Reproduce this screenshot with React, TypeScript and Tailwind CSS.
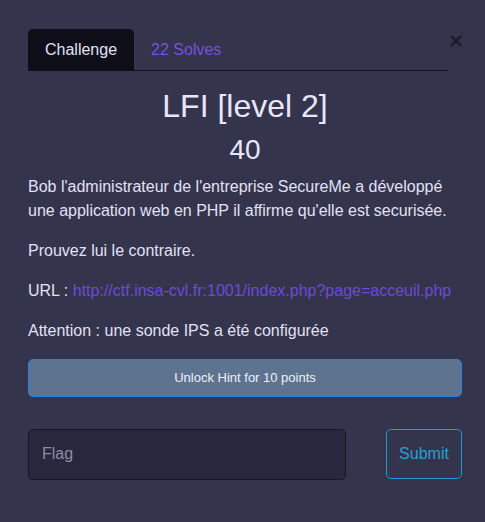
export default function App() {
  return (
    <div
      className="min-h-[522px] w-full bg-[#34344c] pl-[28px] pr-[23px] pt-[29px] text-[#e2e0f6]"
      style={{ fontFamily: '"Liberation Sans", Arial, sans-serif' }}
    >
      {/* Tabs + close */}
      <div className="flex items-start">
        <nav className="flex flex-1 border-b border-[#15151f]">
          <button className="-mb-px rounded-t-[5px] border border-transparent bg-[#0e0e19] px-4 py-2 text-base leading-6 text-[#e2e0f6]">
            Challenge
          </button>
          <button className="-mb-px border border-transparent px-4 py-2 text-base leading-6 text-[#7752df]">
            22 Solves
          </button>
        </nav>
        <button className="-mr-px w-[15px] text-right text-[24px] font-bold leading-6 text-[#1c1c2a]">
          ×
        </button>
      </div>

      {/* Header */}
      <h1 className="mt-[16px] mb-[8px] text-center text-[32px] leading-[1.2] text-[#e8e6fa]">
        LFI [level 2]
      </h1>
      <h3 className="mb-[8px] text-center text-[28px] leading-[1.2] text-[#e8e6fa]">40</h3>

      {/* Description */}
      <div className="text-base leading-6">
        <p className="mb-4">
          Bob l'administrateur de l'entreprise SecureMe a développé une application web en PHP il affirme
          qu'elle est securisée.
        </p>
        <p className="mb-4">Prouvez lui le contraire.</p>
        <p className="mb-4">
          URL :{" "}
          <a href="#" className="text-[#6c4bd8]">
            http://ctf.insa-cvl.fr:1001/index.php?page=acceuil.php
          </a>
        </p>
        <p className="mb-4">Attention : une sonde IPS a été configurée</p>
      </div>

      {/* Hint */}
      <button className="h-[38px] w-full rounded-[5px] border border-[#2c7ee9] bg-[#5e7390] text-[13px] text-[#eef0f8]">
        Unlock Hint for 10 points
      </button>

      {/* Flag form */}
      <div className="mt-[32px] flex items-start justify-between">
        <input
          placeholder="Flag"
          className="h-[51px] w-[318px] rounded-[5px] border border-[#171723] bg-[#27283d] px-[13px] text-base text-[#e2e0f6] outline-none placeholder:text-[#8c8ca3]"
        />
        <button className="h-[50px] w-[76px] rounded-[5px] border border-[#1f97cf] text-base text-[#2a9fd6]">
          Submit
        </button>
      </div>
    </div>
  );
}
